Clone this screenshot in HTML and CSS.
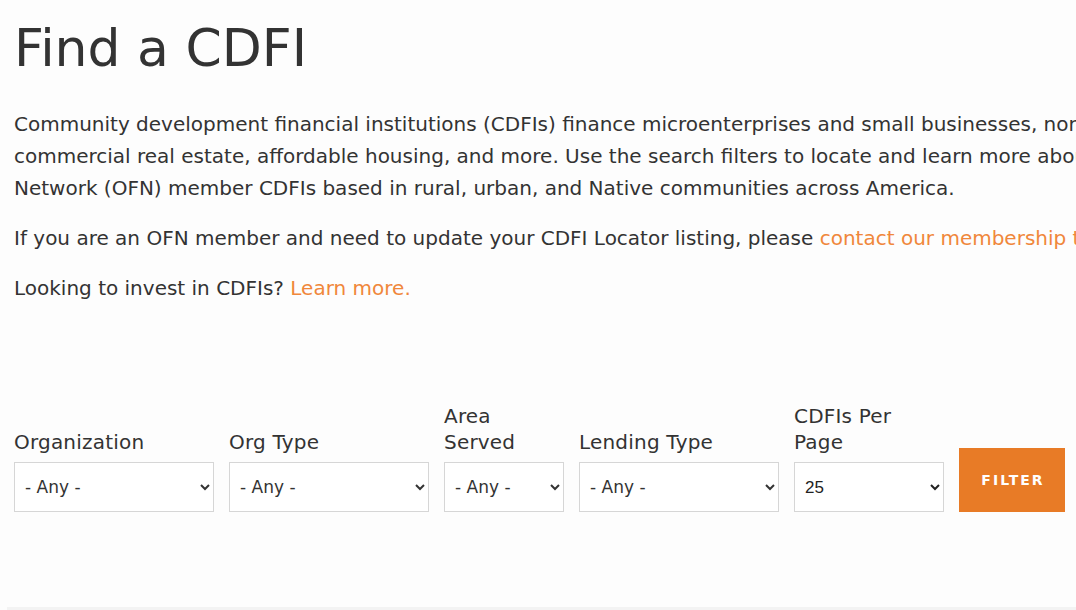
FILE: index.html
```html
<!DOCTYPE html>
<html lang="en">
<head>
    <meta charset="UTF-8">
    <meta name="viewport" content="width=device-width, initial-scale=1.0">
    <title>Find a CDFI</title>
    <link rel="stylesheet" href="styles.css">
</head>
<body>
    <div class="page">
        <h1>Find a CDFI</h1>

        <div class="intro">
            <p>Community development financial institutions (CDFIs) finance microenterprises and small businesses, nonprofit organizations, commercial real estate, affordable housing, and more. Use the search filters to locate and learn more about Opportunity Finance Network (OFN) member CDFIs based in rural, urban, and Native communities across America.</p>
            <p>If you are an OFN member and need to update your CDFI Locator listing, please <a href="#">contact our membership team.</a></p>
            <p>Looking to invest in CDFIs? <a href="#">Learn more.</a></p>
        </div>

        <form class="filters">
            <div class="field field-wide">
                <label for="org">Organization</label>
                <select id="org"><option>- Any -</option></select>
            </div>
            <div class="field field-wide">
                <label for="type">Org Type</label>
                <select id="type"><option>- Any -</option></select>
            </div>
            <div class="field field-small">
                <label for="area">Area Served</label>
                <select id="area"><option>- Any -</option></select>
            </div>
            <div class="field field-wide">
                <label for="lending">Lending Type</label>
                <select id="lending"><option>- Any -</option></select>
            </div>
            <div class="field field-medium">
                <label for="per-page">CDFIs Per Page</label>
                <select id="per-page" class="plain"><option>25</option><option>50</option><option>100</option></select>
            </div>
            <button type="submit">Filter</button>
        </form>
    </div>

    <div class="results"></div>
</body>
</html>
```

FILE: styles.css
```css
html, body {
    overflow: hidden;
}

body {
    margin: 0;
    background-color: #fdfdfd;
    color: #333;
    font-family: "DejaVu Sans", Verdana, sans-serif;
}

.page {
    padding: 18px 0 0 14px;
    height: 589px;
}

h1 {
    margin: 0;
    font-size: 52px;
    font-weight: normal;
    line-height: 61px;
}

.intro {
    width: 1300px;
    margin-top: 29px;
}

.intro p {
    margin: 0 0 18px;
    font-size: 20px;
    line-height: 32px;
}

.intro a {
    color: #f0873b;
    text-decoration: none;
}

.filters {
    display: flex;
    align-items: flex-end;
    gap: 15px;
    margin-top: 99px;
}

.field {
    display: flex;
    flex-direction: column;
}

.field label {
    font-size: 20px;
    line-height: 26px;
    margin-bottom: 7px;
    letter-spacing: 0.2px;
}

.field select {
    height: 50px;
    padding: 0 6px;
    border: 1px solid #d6d6d6;
    border-radius: 0;
    background-color: #fff;
    color: #333;
    font-family: "DejaVu Sans", sans-serif;
    font-size: 17px;
}

.field select.plain {
    font-family: "Liberation Sans", Arial, sans-serif;
    color: #222;
}

.field-wide {
    width: 200px;
}

.field-small {
    width: 120px;
}

.field-medium {
    width: 150px;
}

.filters button {
    width: 106px;
    height: 64px;
    border: none;
    background-color: #e87b26;
    color: #fff;
    font-family: "DejaVu Sans", sans-serif;
    font-size: 14px;
    font-weight: bold;
    letter-spacing: 2px;
    text-transform: uppercase;
    padding: 0 0 0 2px;
    cursor: pointer;
}

.results {
    margin-left: 7px;
    height: 40px;
    background-color: #f3f3f3;
}
```
